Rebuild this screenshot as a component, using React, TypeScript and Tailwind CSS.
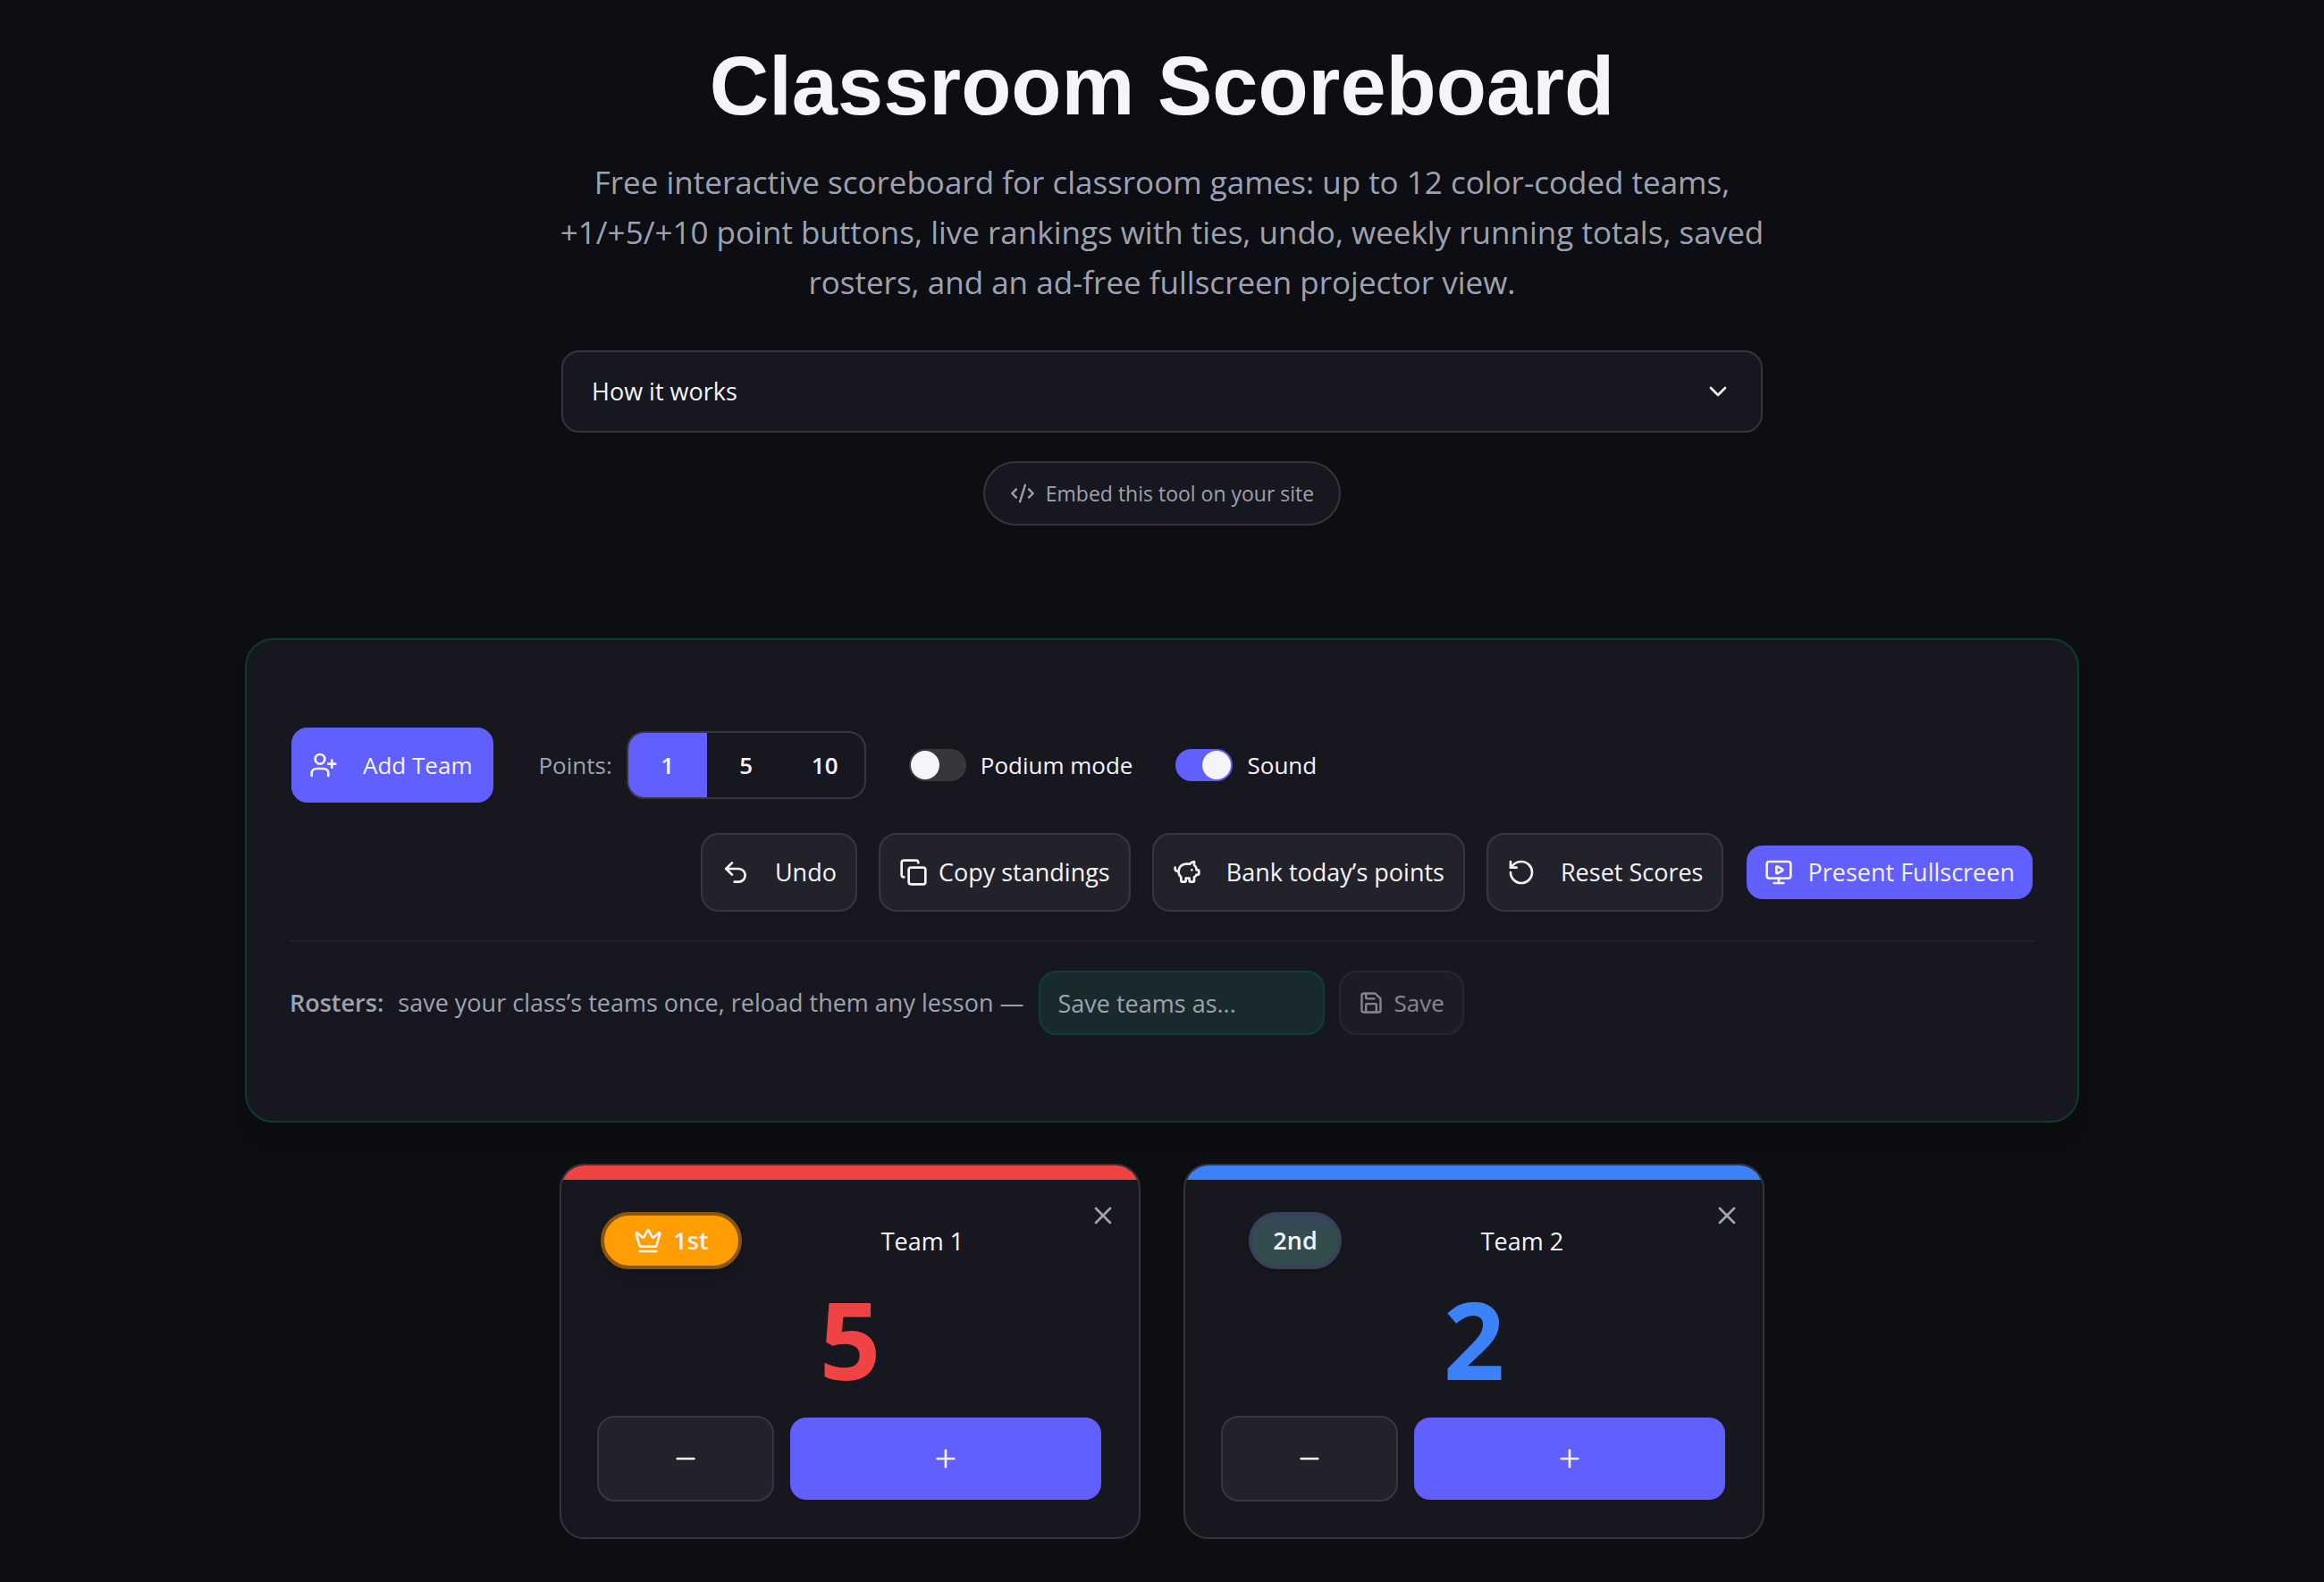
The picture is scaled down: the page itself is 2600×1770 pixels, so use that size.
import { useState } from 'react';
import type { ReactNode } from 'react';
import {
  ChevronDown,
  CodeXml,
  Copy,
  Crown,
  Minus,
  MonitorPlay,
  PiggyBank,
  Plus,
  RotateCcw,
  Save,
  Undo2,
  UserPlus,
  X,
} from 'lucide-react';

interface Team {
  id: number;
  name: string;
  score: number;
  barClass: string;
  scoreClass: string;
}

const initialTeams: Team[] = [
  { id: 1, name: 'Team 1', score: 5, barClass: 'bg-[#f04444]', scoreClass: 'text-[#f04444]' },
  { id: 2, name: 'Team 2', score: 2, barClass: 'bg-[#3b82f6]', scoreClass: 'text-[#3b82f6]' },
];

const pointOptions = [1, 5, 10];

const ToolButton = ({ children, onClick }: { children: ReactNode; onClick?: () => void }) => (
  <button
    onClick={onClick}
    className="flex h-22 items-center rounded-[20px] border-2 border-[#37373d] bg-[#22222a] px-[21px] font-medium"
  >
    {children}
  </button>
);

interface ToggleProps {
  label: string;
  checked: boolean;
  onChange: (val: boolean) => void;
}

const Toggle = ({ label, checked, onChange }: ToggleProps) => (
  <label className="flex items-center gap-4 font-medium">
    <input
      type="checkbox"
      role="switch"
      checked={checked}
      onChange={(e) => onChange(e.target.checked)}
      className="h-9 w-16 appearance-none rounded-full bg-[#37373b] p-0.5 before:block before:size-8
       before:rounded-full before:bg-[#f4f4fa] checked:bg-[#615fff] checked:before:ml-7"
    />
    {label}
  </label>
);

interface TeamCardProps {
  team: Team;
  rank: number;
  onScore: (dir: number) => void;
  onRename: (name: string) => void;
  onRemove: () => void;
}

const TeamCard = ({ team, rank, onScore, onRename, onRemove }: TeamCardProps) => (
  <article className="relative w-[650px] overflow-hidden rounded-[28px] border-2 border-[#35353a] bg-[#17171f]">
    <div className={`h-4 ${team.barClass}`} />
    <button onClick={onRemove} aria-label={`Remove ${team.name}`} className="absolute top-10 right-6 text-[#a1a5b3]">
      <X className="size-8" />
    </button>
    <div className="px-10 pt-9 pb-10">
      <div className="flex items-center justify-center gap-1">
        {rank === 1 ? (
          <span className="flex h-16 w-[158px] items-center justify-center gap-3 rounded-full border-4 border-[#8a5512] bg-[#ff9d05] font-semibold shadow-lg">
            <Crown className="size-8" />
            1st
          </span>
        ) : (
          <span className="flex h-16 w-[104px] items-center justify-center rounded-full border-4 border-[#374257] bg-linear-to-b from-[#374659] to-[#334d4f] to-40% font-semibold shadow-md">
            2nd
          </span>
        )}
        <input
          value={team.name}
          onChange={(e) => onRename(e.target.value)}
          aria-label={`Name of team ${team.id}`}
          className="h-16 w-[396px] text-center font-medium outline-none"
        />
      </div>
      <p className={`pt-4 pb-6 text-center text-[120px]/[124px] font-bold ${team.scoreClass}`}>{team.score}</p>
      <div className="flex gap-4">
        <button
          onClick={() => onScore(-1)}
          aria-label={`Subtract points from ${team.name}`}
          className="flex h-24 w-[198px] shrink-0 items-center justify-center rounded-[20px] border-2 border-[#37373d] bg-[#22222a]"
        >
          <Minus className="size-8" />
        </button>
        <button
          onClick={() => onScore(1)}
          aria-label={`Add points to ${team.name}`}
          className="flex h-24 flex-1 items-center justify-center rounded-[20px] border-2 border-transparent bg-[#615fff] bg-clip-padding"
        >
          <Plus className="size-8" />
        </button>
      </div>
    </div>
  </article>
);

export default function App() {
  const [teams, setTeams] = useState<Team[]>(initialTeams);
  const [points, setPoints] = useState(1);
  const [podium, setPodium] = useState(false);
  const [sound, setSound] = useState(true);
  const [rosterName, setRosterName] = useState('');

  const updateTeam = (id: number, changes: Partial<Team>) => {
    setTeams(teams.map((t) => (t.id === id ? { ...t, ...changes } : t)));
  };

  const resetScores = () => setTeams(teams.map((t) => ({ ...t, score: 0 })));

  return (
    <main className="min-h-screen bg-[#0d0e13] px-10 pt-12 pb-12 font-['Open_Sans','Noto_Sans',sans-serif] text-[27px]/[40px] text-[#f4f4fa]">
      {/* Encabezado */}
      <header className="mx-auto flex max-w-[1344px] flex-col items-center">
        <h1 className="font-['Liberation_Sans',Arial,sans-serif] text-[92px]/[96px] font-bold">Classroom Scoreboard</h1>
        <p className="-mx-4 mt-8 text-center text-[35px]/[56px] text-[#9da2b1]">
          Free interactive scoreboard for classroom games: up to 12 color-coded teams, +1/+5/+10 point buttons, live
          rankings with ties, undo, weekly running totals, saved rosters, and an ad-free fullscreen projector view.
        </p>
        <button className="mt-12 flex h-23 w-full items-center justify-between rounded-[20px] border-2 border-[#35353a] bg-[#17171f] px-8 font-medium">
          How it works
          <ChevronDown className="size-8" />
        </button>
        <button className="mt-8 flex h-18 items-center gap-3 rounded-full border-2 border-[#35353a] bg-[#17171f] px-7 text-[23px] font-medium text-[#9da2b1]">
          <CodeXml className="size-7" />
          Embed this tool on your site
        </button>
      </header>

      {/* Controles */}
      <section className="mx-auto mt-[126px] flex max-w-[2052px] flex-col gap-8 rounded-[32px] border-2 border-[#0f3a30] bg-[#17171f] px-12 py-24 shadow-xl">
        <div className="flex items-center gap-12 text-[26px]">
          <button className="flex h-22 items-center gap-7 rounded-[20px] border-2 border-transparent bg-[#615fff] bg-clip-padding pr-6 pl-5 font-medium">
            <UserPlus className="size-8" />
            Add Team
          </button>
          <div className="flex items-center gap-4">
            <span className="text-[#9da2b1]">Points:</span>
            <div className="flex overflow-hidden rounded-[20px] border-2 border-[#37373b]">
              {pointOptions.map((p) => (
                <button
                  key={p}
                  onClick={() => setPoints(p)}
                  className={`h-18 w-22 font-semibold ${points === p ? 'bg-[#615fff]' : ''}`}
                >
                  {p}
                </button>
              ))}
            </div>
          </div>
          <Toggle label="Podium mode" checked={podium} onChange={setPodium} />
          <Toggle label="Sound" checked={sound} onChange={setSound} />
        </div>
        <div className="flex items-center justify-end gap-6">
          <ToolButton>
            <Undo2 className="mr-7 size-8" />
            Undo
          </ToolButton>
          <ToolButton>
            <Copy className="mr-3 size-8" />
            Copy standings
          </ToolButton>
          <ToolButton>
            <PiggyBank className="mr-7 size-8" />
            Bank today’s points
          </ToolButton>
          <ToolButton onClick={resetScores}>
            <RotateCcw className="mr-7 size-8" />
            Reset Scores
          </ToolButton>
          <button className="flex h-16 items-center gap-4 rounded-[20px] border-2 border-transparent bg-[#615fff] bg-clip-padding px-5 font-medium">
            <MonitorPlay className="size-8" />
            Present Fullscreen
          </button>
        </div>
        <div className="flex items-center gap-4 border-t-2 border-[#212128] pt-8 text-[#9da2b1]">
          <span className="font-semibold">Rosters:</span>
          <label htmlFor="roster-name">save your class’s teams once, reload them any lesson —</label>
          <input
            id="roster-name"
            type="text"
            placeholder="Save teams as..."
            value={rosterName}
            onChange={(e) => setRosterName(e.target.value)}
            className="h-18 w-80 rounded-[20px] border-2 border-[#0c4031] bg-[#182a2b] px-5 outline-none placeholder:text-[#9da2b1]"
          />
          <button
            disabled={rosterName === ''}
            className="flex h-18 items-center gap-3 rounded-[20px] border-2 border-[#37373d] bg-[#22222a] px-5 text-[26px] font-medium text-[#f4f4fa] disabled:opacity-50"
          >
            <Save className="size-7" />
            Save
          </button>
        </div>
      </section>

      {/* Equipos */}
      <section className="mt-[46px] flex flex-wrap justify-center gap-12">
        {teams.map((team) => (
          <TeamCard
            key={team.id}
            team={team}
            rank={1 + teams.filter((t) => t.score > team.score).length}
            onScore={(dir) => updateTeam(team.id, { score: team.score + dir * points })}
            onRename={(name) => updateTeam(team.id, { name })}
            onRemove={() => setTeams(teams.filter((t) => t.id !== team.id))}
          />
        ))}
      </section>
    </main>
  );
}
